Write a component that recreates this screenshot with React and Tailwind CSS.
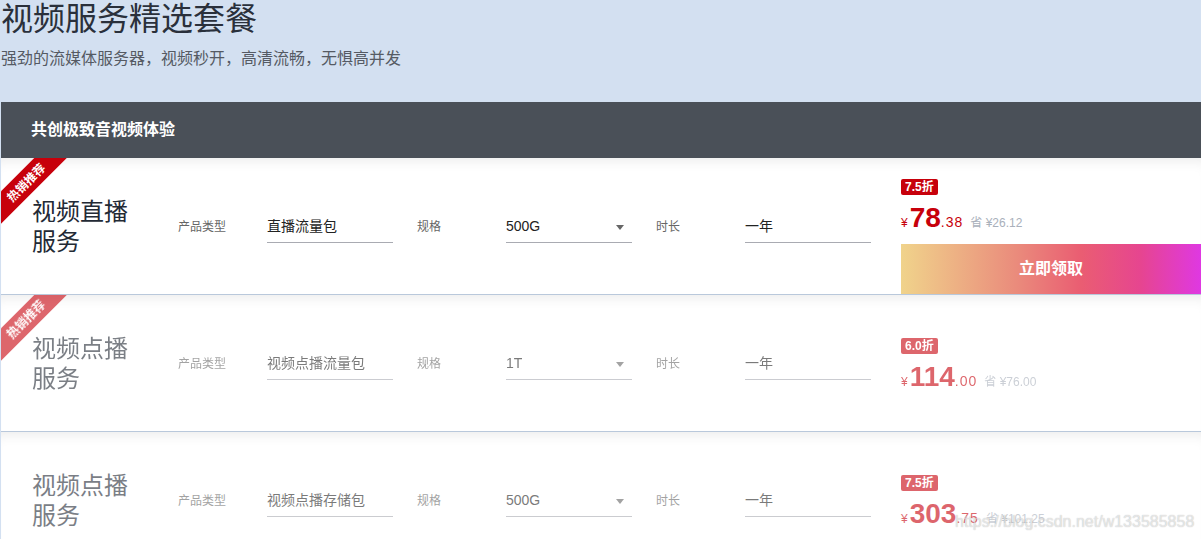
import clsx from 'clsx'

const plans = [
  { title: '视频直播服务', type: '直播流量包', spec: '500G', term: '一年', off: '7.5折', yuan: '78', cents: '.38', save: '¥26.12', hot: true, active: true },
  { title: '视频点播服务', type: '视频点播流量包', spec: '1T', term: '一年', off: '6.0折', yuan: '114', cents: '.00', save: '¥76.00', hot: true },
  { title: '视频点播服务', type: '视频点播存储包', spec: '500G', term: '一年', off: '7.5折', yuan: '303', cents: '.75', save: '¥101.25' },
]

function Ribbon() {
  return (
    <div className="absolute left-0 top-0 h-[70px] w-[70px] overflow-hidden">
      <div className="absolute left-[-25px] top-[13px] flex h-[23px] w-[100px] -rotate-45 items-center justify-center bg-[#c7000b] text-[12px] font-bold text-white">
        热销推荐
      </div>
    </div>
  )
}

function Field({ label, children, select }) {
  return (
    <div className="flex items-center">
      <span className="w-[89px] text-[12px] text-[#666]">{label}</span>
      <div className="relative flex h-[31px] w-[126px] items-center border-b border-[#a9abb2] text-[14px] text-[#222]">
        {children}
        {select && (
          <span className="absolute right-[8px] top-[13px] h-0 w-0 border-x-[4px] border-t-[5px] border-x-transparent border-t-[#666]" />
        )}
      </div>
    </div>
  )
}

function PlanRow({ plan }) {
  return (
    <div className="relative h-[137px] border-b border-[#b9c8db] bg-white shadow-[inset_0_12px_14px_-10px_rgba(0,0,0,0.09)]">
      <div className={clsx('relative flex h-full items-center pl-[31px]', !plan.active && 'opacity-60')}>
        {plan.hot && <Ribbon />}
        <div className="w-[146px] pt-[2px]">
          <h3 className="max-w-[100px] text-[24px] leading-[30px] text-[#232a35]">{plan.title}</h3>
        </div>
        <div className="flex items-center gap-[24px] pt-[2px]">
          <Field label="产品类型">{plan.type}</Field>
          <Field label="规格" select>{plan.spec}</Field>
          <Field label="时长">{plan.term}</Field>
        </div>
        <div className={clsx('ml-[30px] flex h-full w-[300px] flex-col', plan.active ? 'pt-[21px]' : 'pt-[43px]')}>
          <span className="h-[16px] self-start rounded-[2px] bg-[#c7000b] px-[4px] text-[12px] font-bold leading-[16px] text-white">
            {plan.off}
          </span>
          <div className="mt-[9px] flex items-baseline text-[#c7000b]">
            <span className="text-[12px]">¥</span>
            <span className="ml-[2px] text-[28px] font-bold leading-[28px]">{plan.yuan}</span>
            <span className="text-[14px] tracking-[1px]">{plan.cents}</span>
            <span className="ml-[7px] text-[12px] text-[#a9b0bb]">省 {plan.save}</span>
          </div>
          {plan.active && (
            <button className="mt-auto h-[50px] w-full bg-[linear-gradient(90deg,#f0d38b_0%,#ea8c7c_38%,#ea5d72_60%,#e64590_80%,#df38e2_100%)] text-[16px] font-bold text-white">
              立即领取
            </button>
          )}
        </div>
      </div>
    </div>
  )
}

export default function App() {
  return (
    <div className="relative h-[539px] w-[1201px] overflow-hidden bg-[#d3e0f1] pl-px font-['Liberation_Sans','Noto_Sans_CJK_SC',sans-serif]">
      <div className="flex h-[102px] flex-col">
        <h1 className="mt-[1px] text-[32px] leading-[36px] text-[#2a303b]">视频服务精选套餐</h1>
        <p className="mt-[10px] text-[16px] leading-[24px] text-[#555a63]">强劲的流媒体服务器，视频秒开，高清流畅，无惧高并发</p>
      </div>
      <div className="flex h-[56px] items-center bg-[#4a5058] pl-[30px] text-[16px] font-bold text-white">
        共创极致音视频体验
      </div>
      {plans.map((p, i) => (
        <PlanRow key={i} plan={p} />
      ))}
      <span className="absolute left-[955px] top-[510px] text-[16px] text-white/60 [text-shadow:0_0_1px_rgba(0,0,0,0.3)]">
        https://blog.csdn.net/w133585858
      </span>
    </div>
  )
}
